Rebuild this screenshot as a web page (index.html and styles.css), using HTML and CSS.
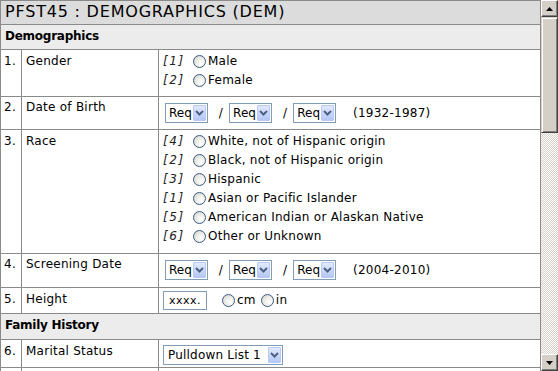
FILE: index.html
```html
<!DOCTYPE html>
<html>
<head>
<meta charset="utf-8">
<link rel="stylesheet" href="styles.css">
</head>
<body>
<div class="window">
  <div class="page">
    <table class="form">
      <colgroup><col class="c-num"><col class="c-label"><col class="c-value"></colgroup>
      <tr class="title-row"><td colspan="3">PFST45 : DEMOGRAPHICS (DEM)</td></tr>
      <tr class="section-row first"><td colspan="3">Demographics</td></tr>
      <tr class="gender-row">
        <td class="num">1.</td><td class="label">Gender</td>
        <td class="value">
          <div class="opt"><span class="code">[1]</span><span class="radio"></span>Male</div>
          <div class="opt"><span class="code">[2]</span><span class="radio"></span>Female</div>
        </td>
      </tr>
      <tr class="sel-row">
        <td class="num">2.</td><td class="label">Date of Birth</td>
        <td class="value">
          <div class="date">
            <span class="select"><span class="sel-text">Req</span><span class="arrow"><svg width="9" height="6" viewBox="0 0 9 6"><path d="M1 1 L4.5 4.5 L8 1" fill="none" stroke="#4d6185" stroke-width="2"/></svg></span></span>
            <span class="slash">/</span>
            <span class="select"><span class="sel-text">Req</span><span class="arrow"><svg width="9" height="6" viewBox="0 0 9 6"><path d="M1 1 L4.5 4.5 L8 1" fill="none" stroke="#4d6185" stroke-width="2"/></svg></span></span>
            <span class="slash">/</span>
            <span class="select"><span class="sel-text">Req</span><span class="arrow"><svg width="9" height="6" viewBox="0 0 9 6"><path d="M1 1 L4.5 4.5 L8 1" fill="none" stroke="#4d6185" stroke-width="2"/></svg></span></span>
            <span class="range">(1932-1987)</span>
          </div>
        </td>
      </tr>
      <tr class="race-row">
        <td class="num">3.</td><td class="label">Race</td>
        <td class="value">
          <div class="opt"><span class="code">[4]</span><span class="radio"></span>White, not of Hispanic origin</div>
          <div class="opt"><span class="code">[2]</span><span class="radio"></span>Black, not of Hispanic origin</div>
          <div class="opt"><span class="code">[3]</span><span class="radio"></span>Hispanic</div>
          <div class="opt"><span class="code">[1]</span><span class="radio"></span>Asian or Pacific Islander</div>
          <div class="opt"><span class="code">[5]</span><span class="radio"></span>American Indian or Alaskan Native</div>
          <div class="opt"><span class="code">[6]</span><span class="radio"></span>Other or Unknown</div>
        </td>
      </tr>
      <tr class="sel-row tall">
        <td class="num">4.</td><td class="label">Screening Date</td>
        <td class="value">
          <div class="date">
            <span class="select"><span class="sel-text">Req</span><span class="arrow"><svg width="9" height="6" viewBox="0 0 9 6"><path d="M1 1 L4.5 4.5 L8 1" fill="none" stroke="#4d6185" stroke-width="2"/></svg></span></span>
            <span class="slash">/</span>
            <span class="select"><span class="sel-text">Req</span><span class="arrow"><svg width="9" height="6" viewBox="0 0 9 6"><path d="M1 1 L4.5 4.5 L8 1" fill="none" stroke="#4d6185" stroke-width="2"/></svg></span></span>
            <span class="slash">/</span>
            <span class="select"><span class="sel-text">Req</span><span class="arrow"><svg width="9" height="6" viewBox="0 0 9 6"><path d="M1 1 L4.5 4.5 L8 1" fill="none" stroke="#4d6185" stroke-width="2"/></svg></span></span>
            <span class="range">(2004-2010)</span>
          </div>
        </td>
      </tr>
      <tr class="height-row">
        <td class="num">5.</td><td class="label">Height</td>
        <td class="value">
          <div class="height">
            <span class="textbox">xxxx.</span>
            <span class="unit"><span class="radio"></span>cm</span>
            <span class="unit"><span class="radio"></span>in</span>
          </div>
        </td>
      </tr>
      <tr class="section-row"><td colspan="3">Family History</td></tr>
      <tr class="sel-row2">
        <td class="num">6.</td><td class="label">Marital Status</td>
        <td class="value">
          <span class="select wide"><span class="sel-text">Pulldown List 1</span><span class="arrow"><svg width="9" height="6" viewBox="0 0 9 6"><path d="M1 1 L4.5 4.5 L8 1" fill="none" stroke="#4d6185" stroke-width="2"/></svg></span></span>
        </td>
      </tr>
      <tr class="last-row">
        <td class="num">&nbsp;</td><td class="label">&nbsp;</td><td class="value">&nbsp;</td>
      </tr>
    </table>
  </div>
  <div class="scrollbar">
    <div class="sb-btn"><svg width="7" height="4" viewBox="0 0 7 4"><path d="M0 4 L3.5 0 L7 4 Z" fill="#000"/></svg></div>
    <div class="sb-thumb"></div>
    <div class="sb-track"></div>
    <div class="sb-btn"><svg width="7" height="4" viewBox="0 0 7 4"><path d="M0 0 L3.5 4 L7 0 Z" fill="#000"/></svg></div>
  </div>
</div>
</body>
</html>
```

FILE: styles.css
```css
html, body {
  margin: 0;
  padding: 0;
  background: #fff;
}
body {
  font-family: "DejaVu Sans", Verdana, sans-serif;
  font-size: 12px;
  letter-spacing: 0.25px;
  color: #000;
}
.window {
  display: flex;
  width: 558px;
  height: 371px;
  overflow: hidden;
}
.page {
  flex: 1;
  overflow: hidden;
}
.form {
  border-collapse: collapse;
  width: 541px;
  table-layout: fixed;
}
.c-num { width: 21px; }
.c-label { width: 137px; }
.c-value { width: auto; }
.form td {
  border: 1px solid #8a8a8a;
  padding: 2px 4px 4px 4px;
  line-height: 19px;
  vertical-align: top;
}
.title-row td {
  background: #dcdcdc;
  font-size: 16px;
  letter-spacing: 0.8px;
  padding: 1px 4px 2px 4px;
  line-height: 20px;
}
.section-row td {
  background: #ececec;
  font-weight: bold;
  letter-spacing: -0.25px;
  padding: 2px 4px 4px 4px;
}
.section-row.first td { padding: 2px 4px 3px 4px; }
.form td.num { padding-left: 3px; padding-right: 0; }
.form td.label { padding-left: 4px; }

.gender-row td.value { padding: 2px 4px 6px 4px; }
.race-row td.value { padding: 2px 4px 7px 4px; }

.opt {
  display: flex;
  align-items: center;
  height: 19px;
}
.code {
  font-style: italic;
  width: 30px;
  letter-spacing: 1.6px;
  color: #222;
}
.radio {
  display: inline-block;
  flex: none;
  width: 11px;
  height: 11px;
  border: 1px solid #3a5b86;
  border-radius: 50%;
  background: radial-gradient(circle at 65% 65%, #fefefe 0%, #f0f0ea 40%, #cfd0c8 100%);
  margin-right: 2px;
}
.form .sel-row td.value { padding: 5px 4px 5px 4px; }
.form .sel-row.tall td.value { padding: 5px 4px 6px 4px; }
.sel-row td.num, .sel-row td.label { padding-top: 1px; }
.date {
  display: flex;
  align-items: center;
  height: 22px;
  padding-left: 2px;
}
.select {
  display: inline-flex;
  align-items: center;
  height: 20px;
  border: 1px solid #7f9db9;
  background: #fff;
  box-sizing: border-box;
  padding: 1px;
  letter-spacing: 0;
}
.sel-text {
  padding: 0 1px 0 2px;
  line-height: 16px;
}
.arrow {
  display: inline-flex;
  align-items: center;
  justify-content: center;
  flex: none;
  width: 13px;
  height: 16px;
  box-sizing: border-box;
  border: 1px solid #b9c9ef;
  border-radius: 1px;
  background: linear-gradient(#e1eafe, #b4c8f6);
}
.slash {
  margin: 0 6px 0 11px;
}
.range {
  margin-left: 17px;
}
.form .height-row td.value { padding: 3px 4px 3px 4px; }
.height {
  display: flex;
  align-items: center;
  height: 19px;
}
.textbox {
  display: inline-block;
  box-sizing: border-box;
  width: 44px;
  height: 19px;
  border: 1px solid #7f9db9;
  text-align: center;
  line-height: 17px;
  font-size: 11px;
  letter-spacing: 0.5px;
  margin-right: 15px;
}
.unit {
  display: inline-flex;
  align-items: center;
  margin-right: 5px;
}
.form .sel-row2 td.value { padding: 5px 4px 2px 4px; }
.select.wide { width: 120px; justify-content: space-between; }
.wide .sel-text { padding-left: 3px; letter-spacing: 0.2px; }
.last-row td { height: 19px; }

.scrollbar {
  width: 17px;
  display: flex;
  flex-direction: column;
  background: #d4d0c8;
}
.sb-btn {
  height: 17px;
  flex: none;
  box-sizing: border-box;
  display: flex;
  align-items: center;
  justify-content: center;
  background: #d4d0c8;
  border: 1px solid;
  border-color: #fff #404040 #404040 #fff;
  box-shadow: inset -1px -1px 0 #808080;
}
.sb-thumb {
  height: 116px;
  flex: none;
  box-sizing: border-box;
  background: #d4d0c8;
  border: 1px solid;
  border-color: #d4d0c8 #404040 #404040 #d4d0c8;
  box-shadow: inset 1px 1px 0 #fff, inset -1px -1px 0 #808080;
}
.sb-track {
  flex: 1;
  background-color: #fff;
  background-image:
    linear-gradient(45deg, #d4d0c8 25%, transparent 25%, transparent 75%, #d4d0c8 75%),
    linear-gradient(45deg, #d4d0c8 25%, transparent 25%, transparent 75%, #d4d0c8 75%);
  background-size: 2px 2px;
  background-position: 0 0, 1px 1px;
}
```
